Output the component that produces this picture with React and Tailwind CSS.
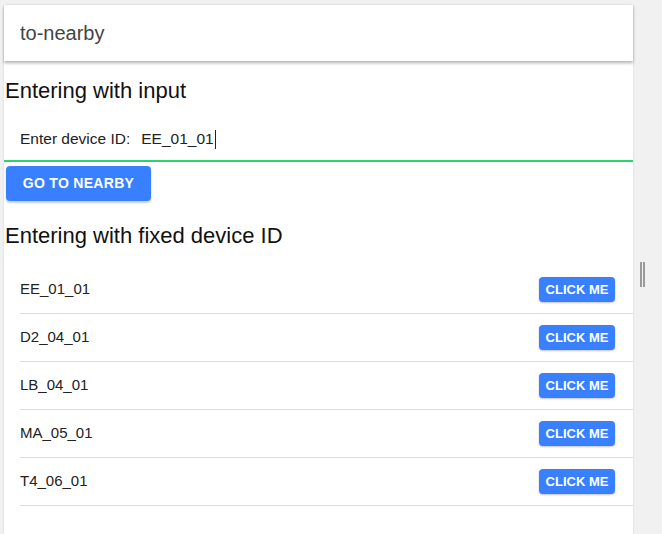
import React from "react";

const ids = ["EE_01_01", "D2_04_01", "LB_04_01", "MA_05_01", "T4_06_01"];

export default function App() {
  return (
    <div
      className="flex h-[534px] w-[662px] overflow-hidden bg-[#f1f1f1] pl-[4px] pt-[5px]"
      style={{ fontFamily: '"Liberation Sans", Arial, sans-serif' }}
    >
      <div className="flex w-[629px] flex-col bg-white shadow-[0_0_2px_rgba(0,0,0,0.12)]">
        <div className="relative z-10 flex h-[56px] shrink-0 items-center bg-white pl-4 shadow-[0_2px_3px_rgba(0,0,0,0.3)]">
          <span className="text-[20px] text-[#444]">to-nearby</span>
        </div>

        <div className="mt-[18px] pl-px text-[22px] leading-[24px] text-[#111]">Entering with input</div>

        <div className="mt-[13px] flex h-[46px] items-center border-b-2 border-[#2dd36f] pl-4 pt-[2px] text-[15.5px] text-[#222]">
          <span>Enter device ID:</span>
          <span className="ml-[11px]">EE_01_01</span>
          <span className="ml-px inline-block h-[19px] w-px bg-[#222]" />
        </div>

        <div className="ml-[2px] mt-[4px]">
          <button className="flex h-[35px] w-[145px] items-center justify-center rounded-[4px] bg-[#3880ff] text-[14px] font-bold tracking-[0.3px] text-white shadow-[0_2px_2px_rgba(0,0,0,0.2)]">
            GO TO NEARBY
          </button>
        </div>

        <div className="mt-[23px] pl-px text-[22px] leading-[24px] text-[#111]">Entering with fixed device ID</div>

        <div className="mt-[18px] pl-4">
          {ids.map((id) => (
            <div
              key={id}
              className="flex h-[48px] items-center justify-between border-b border-[#dedede] pr-[18px] text-[15px] text-[#222]"
            >
              <span>{id}</span>
              <button className="flex h-[25px] w-[76px] items-center justify-center rounded-[4px] bg-[#3880ff] text-[13px] font-bold text-white shadow-[0_1px_2px_rgba(0,0,0,0.25)]">
                CLICK ME
              </button>
            </div>
          ))}
        </div>
      </div>

      <div className="flex flex-1 border-l border-[#e6e6e6]">
        <div className="ml-[6px] mt-[257px] flex h-[25px] gap-[1px]">
          <div className="h-full w-[2px] bg-[#9a9a9a]" />
          <div className="h-full w-[2px] bg-[#9a9a9a]" />
        </div>
      </div>
    </div>
  );
}
